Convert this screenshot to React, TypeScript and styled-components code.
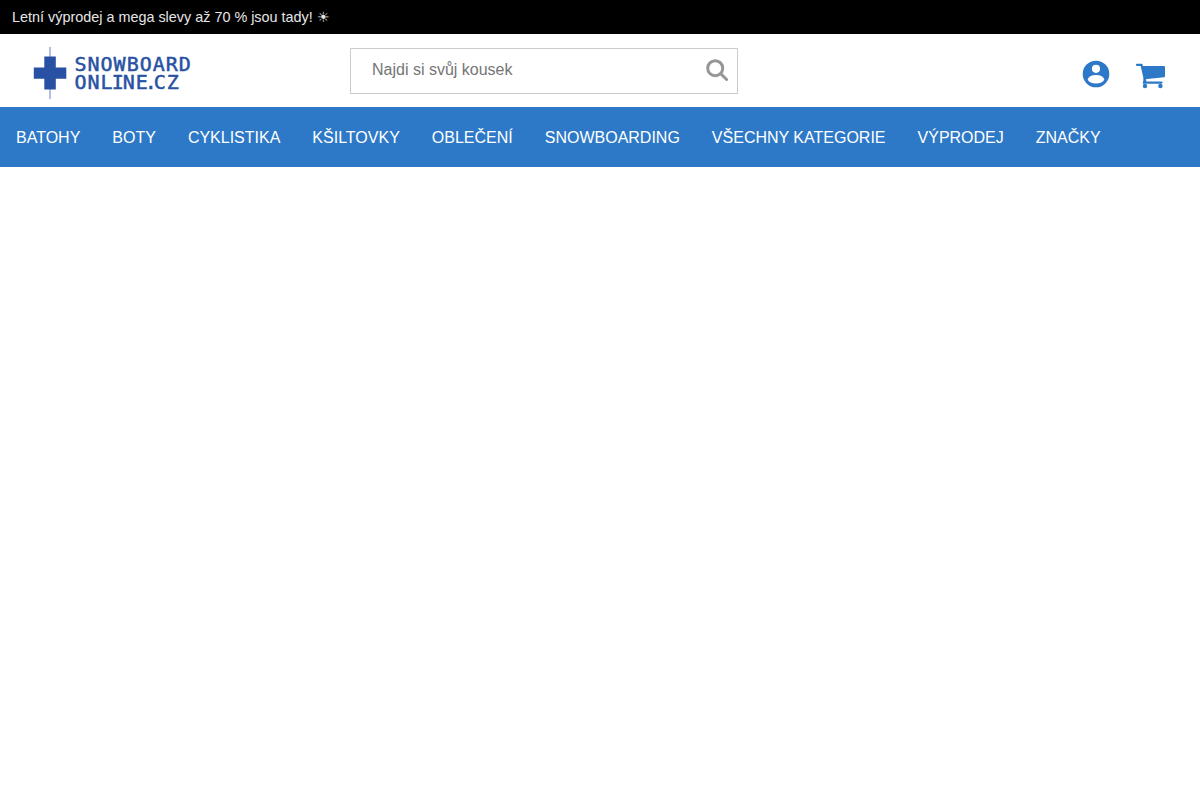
import React from 'react';
import styled, { createGlobalStyle } from 'styled-components';

const GlobalStyle = createGlobalStyle`
  * { box-sizing: border-box; }
  body {
    margin: 0;
    background: #fff;
    font-family: "Liberation Sans", Arial, sans-serif;
    font-size: 16px;
  }
`;

const Announcement = styled.div`
  height: 34px;
  padding: 0 12px;
  background: #000;
  color: #e6e6e6;
  font-size: 14.4px;
  line-height: 34px;
`;

const Header = styled.header`
  display: grid;
  grid-template-columns: 318px 388px 1fr;
  align-items: start;
  height: 73px;
  padding: 13px 34px 0 32px;
`;

const Logo = styled.a`
  display: flex;
  height: 52px;
  color: #2851a3;
  text-decoration: none;
`;

const LogoMark = styled.svg`
  flex: none;
  width: 36px;
  height: 52px;
`;

const LogoText = styled.span`
  display: flex;
  flex-direction: column;
  padding: 8px 0 0 6.5px;
  font-family: "DejaVu Sans Mono", monospace;
  font-size: 20px;
  line-height: 18px;
  -webkit-text-stroke: 0.5px #2851a3;
`;

const LogoLine = styled.span`
  display: block;
  white-space: nowrap;
  letter-spacing: 1px;
`;

const Kern = styled.span<{ $spacing: number }>`
  letter-spacing: ${({ $spacing }) => $spacing}px;
`;

const SearchBox = styled.form`
  display: flex;
  height: 46px;
  margin-top: 1px;
  padding: 0 8px 0 21px;
  border: 1px solid #ccc;
`;

const SearchInput = styled.input`
  flex: 1;
  min-width: 0;
  height: 42px;
  padding: 0;
  border: 0;
  outline: 0;
  background: transparent;
  font: 16px "Liberation Sans", Arial, sans-serif;
  &::placeholder { color: #757575; }
`;

const SearchButton = styled.button`
  width: 24px;
  height: 24px;
  margin-top: 9px;
  padding: 0;
  border: 0;
  background: none;
  color: #969696;
  svg { display: block; }
`;

const Actions = styled.div`
  display: flex;
  justify-content: flex-end;
  gap: 22px;
  padding-top: 11px;
  color: #2d79c7;
  svg { display: block; }
`;

const Nav = styled.nav`
  display: flex;
  gap: 32px;
  height: 60px;
  padding: 1px 16px 0;
  background: #2d79c7;
  line-height: 59px;
`;

const NavLink = styled.a`
  color: #fff;
  text-decoration: none;
  white-space: nowrap;
`;

const categories = [
  'BATOHY', 'BOTY', 'CYKLISTIKA', 'KŠILTOVKY', 'OBLEČENÍ',
  'SNOWBOARDING', 'VŠECHNY KATEGORIE', 'VÝPRODEJ', 'ZNAČKY',
];

export default function App() {
  return (
    <>
      <GlobalStyle />
      <Announcement>Letní výprodej a mega slevy až 70 % jsou tady! ☀</Announcement>
      <Header>
        <Logo>
          <LogoMark viewBox="0 0 36 52">
            <path d="M18 0V52" stroke="#9fb2d8" strokeWidth="1.6" />
            <path d="M12.3 9.5h11.5v11h10.5v11.3H23.8v10.7H12.3V31.8H1.8V20.5h10.5z" fill="currentColor" />
          </LogoMark>
          <LogoText>
            <LogoLine>SNOWBOARD</LogoLine>
            <LogoLine>
              ON<Kern $spacing={-1}>LI</Kern>N<Kern $spacing={-3}>E.</Kern>CZ
            </LogoLine>
          </LogoText>
        </Logo>
        <SearchBox>
          <SearchInput placeholder="Najdi si svůj kousek" />
          <SearchButton type="button" aria-label="Hledat">
            <svg width="24" height="24" viewBox="0 0 24 24" fill="none" stroke="currentColor" strokeWidth="3">
              <circle cx="10.2" cy="10.2" r="7.5" />
              <path d="M16 16l5.6 5.5" strokeLinecap="round" />
            </svg>
          </SearchButton>
        </SearchBox>
        <Actions>
          <svg width="32" height="32" viewBox="0 0 32 32">
            <circle cx="16" cy="16" r="13.3" fill="currentColor" />
            <circle cx="16" cy="10.8" r="4.1" fill="#fff" />
            <ellipse cx="16" cy="21.2" rx="8.1" ry="4.3" fill="#fff" />
          </svg>
          <svg width="32" height="32" viewBox="0 0 32 32" fill="currentColor">
            <path d="M3 6.8H7.5L11.3 23.2" fill="none" stroke="currentColor" strokeWidth="2.2" strokeLinecap="round" strokeLinejoin="round" />
            <path d="M8 8H30a1 1 0 0 1 1 1V18.2a1 1 0 0 1-.9 1L11 21.3z" />
            <path d="M10.8 20.5L10 24.6H27.5" fill="none" stroke="currentColor" strokeWidth="2.2" strokeLinecap="round" />
            <circle cx="11" cy="28" r="2.2" />
            <circle cx="26.4" cy="28" r="2.2" />
          </svg>
        </Actions>
      </Header>
      <Nav>
        {categories.map((name) => <NavLink key={name}>{name}</NavLink>)}
      </Nav>
    </>
  );
}
